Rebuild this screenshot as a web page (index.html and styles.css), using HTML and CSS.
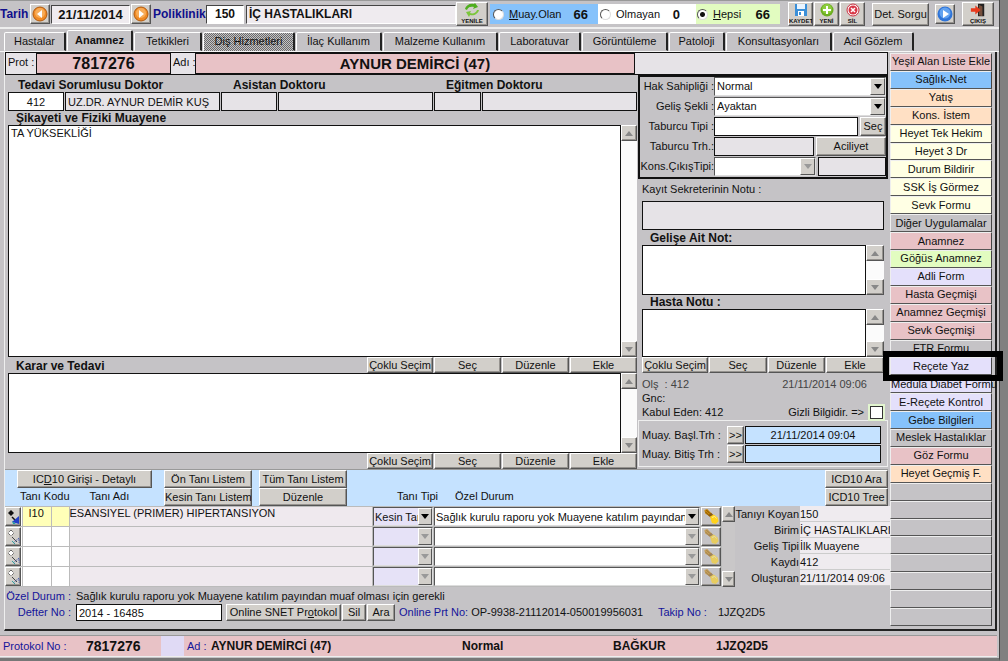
FILE: index.html
```
<!DOCTYPE html>
<html lang="tr">
<head>
<meta charset="utf-8">
<title>Poliklinik - Anamnez</title>
<link rel="stylesheet" href="styles.css">
</head>
<body>
<svg class="defs" aria-hidden="true">
  <symbol id="up" viewBox="0 0 8 5"><path d="M4 0L8 5H0z"/></symbol>
  <symbol id="down" viewBox="0 0 8 5"><path d="M0 0H8L4 5z"/></symbol>
  <symbol id="brush" viewBox="0 0 18 18"><path d="M2 2l3-1 5 5-2 3-5-3z" fill="#c98a10"/><path d="M4 2l4 4M3 4l4 4" stroke="#7a4a00" stroke-width="1"/><path d="M6 8l3-3 3 3-2 3z" fill="#8a5a10"/><path d="M8 9l4-2 4 3 1 4-3 3-4-1-1-3z" fill="#ffd21c"/><path d="M10 10l3-1 2 2" stroke="#fff3a0" fill="none"/></symbol>
  <symbol id="pick" viewBox="0 0 14 16"><path d="M5 1L8 4 5 7 2 4z" fill="#111"/><path d="M6 8l4 4" stroke="#111" stroke-width="1.5"/><path d="M6 13L13 7V15z" fill="#2340c8"/><path d="M6 12l4 3H7z" fill="#20a0a0"/></symbol>
  <symbol id="pick-off" viewBox="0 0 14 16"><path d="M5 1L8 4 5 7 2 4z" fill="#fff" stroke="#333" stroke-dasharray="1 1"/><path d="M6 8l5 5" stroke="#444"/><path d="M7 14l6-5v5" stroke="#4a60b0" fill="none" stroke-dasharray="2 1"/><path d="M6 12l3 3" stroke="#30a0a0"/></symbol>
</svg>
<div class="app">
<div class="window">
  <header class="toolbar">
    <label class="tb-label" for="tarih">Tarih</label>
    <button class="btn nav" aria-label="Önceki gün"><svg viewBox="0 0 16 16"><circle cx="8" cy="8" r="7" fill="#f08a24" stroke="#b05a10"/><circle cx="8" cy="7" r="5" fill="#f8ac58"/><path d="M10 4v8L5 8z" fill="#fff"/></svg></button>
    <input class="tb-input date" id="tarih" value="21/11/2014">
    <button class="btn nav" aria-label="Sonraki gün"><svg viewBox="0 0 16 16"><circle cx="8" cy="8" r="7" fill="#f08a24" stroke="#b05a10"/><circle cx="8" cy="7" r="5" fill="#f8ac58"/><path d="M6 4v8l5-4z" fill="#fff"/></svg></button>
    <label class="tb-label pol" for="pol">Poliklinik</label>
    <input class="tb-input code" id="pol" value="150">
    <input class="tb-input clinic" aria-label="Poliklinik adı" value="İÇ HASTALIKLARI">
    <button class="btn tool wide"><svg viewBox="0 0 16 14"><path d="M1 6C2 2 6 0 10 1l1-1 3 4-5 2 1-2C7 3 4 4 3 7z" fill="#4fae1e"/><path d="M15 7c-1 4-5 6-9 5l-1 2-3-5 5-1-1 2c3 1 6 0 7-3z" fill="#7cc63a"/></svg><span>YENİLE</span></button>
    <div class="filters">
      <label class="f-blue"><input type="radio" name="f"><span><u>M</u>uay.Olan</span><b>66</b></label>
      <label class="f-white"><input type="radio" name="f"><span>Olmayan</span><b>0</b></label>
      <label class="f-green"><input type="radio" name="f" checked><span><u>H</u>epsi</span><b>66</b></label>
    </div>
    <div class="tools">
      <button class="btn tool"><svg viewBox="0 0 14 14"><path d="M1 1h12v12H1z" fill="#3a8fd8"/><path d="M3 1h8v5H3z" fill="#e8f4ff"/><path d="M4 8h6v5H4z" fill="#fff"/><path d="M5 9h2v3H5z" fill="#3a8fd8"/></svg><span>KAYDET</span></button>
      <button class="btn tool"><svg viewBox="0 0 14 14"><circle cx="7" cy="7" r="6.500" fill="#6cae20"/><circle cx="7" cy="6" r="5" fill="#8ccc3c"/><path d="M6 3h2v3h3v2H8v3H6V8H3V6h3z" fill="#fff"/></svg><span>YENİ</span></button>
      <button class="btn tool"><svg viewBox="0 0 14 14"><circle cx="7" cy="7" r="6" fill="#fff" stroke="#c83040"/><circle cx="7" cy="7" r="4.500" fill="#d83848"/><path d="M5 5l4 4M9 5l-4 4" stroke="#fff" stroke-width="1.500"/></svg><span>SİL</span></button>
    </div>
    <button class="btn query">Det. Sorgu</button>
    <button class="btn nav play" aria-label="Çalıştır"><svg viewBox="0 0 16 16"><circle cx="8" cy="8" r="7.500" fill="#2f74d8"/><circle cx="8" cy="7" r="5.500" fill="#62a2f0"/><path d="M6 4v8l6-4z" fill="#fff"/></svg></button>
    <button class="btn tool wide exit"><svg viewBox="0 0 18 14"><path d="M9 0h7v14H9z" fill="#222"/><path d="M10 1l4 2v11l-4-1z" fill="#76503c"/><path d="M1 5h5V2l6 5-6 5V9H1z" fill="#e83a1c"/></svg><span>ÇIKIŞ</span></button>
  </header>

  <nav class="tabs">
    <button class="t1">Hastalar</button><button class="t2 active">Anamnez</button><button class="t3">Tetkikleri</button><button class="t4 dither">Diş Hizmetleri</button><button class="t5">İlaç Kullanım</button><button class="t6">Malzeme Kullanım</button><button class="t7">Laboratuvar</button><button class="t8">Görüntüleme</button><button class="t9">Patoloji</button><button class="t10">Konsultasyonları</button><button class="t11">Acil Gözlem</button>
  </nav>

  <div class="page">
    <main class="main">
      <section class="patient">
        <span class="p-label">Prot :</span><strong class="p-no">7817276</strong>
        <span class="p-label adi">Adı :</span><strong class="p-name">AYNUR DEMİRCİ (47)</strong><span class="p-rest"></span>
      </section>

      <div class="columns">
        <section class="left">
          <div class="doctors">
            <label class="head" for="d1">Tedavi Sorumlusu Doktor</label><label class="head" for="d2">Asistan Doktoru</label><label class="head" for="d3">Eğitmen Doktoru</label>
            <div class="pair p1"><input id="d1" class="field white mid" value="412"><input class="field" aria-label="Doktor adı" value="UZ.DR. AYNUR DEMİR KUŞ"></div>
            <div class="pair"><input id="d2" class="field"><input class="field" aria-label="Asistan adı"></div>
            <div class="pair p3"><input id="d3" class="field"><input class="field" aria-label="Eğitmen adı"></div>
          </div>
          <label class="head line" for="sikayet">Şikayeti ve Fiziki Muayene</label>
          <div class="memo tall"><textarea id="sikayet">TA YÜKSEKLİĞİ</textarea><div class="scroll"><button class="btn" aria-label="Yukarı"><svg><use href="#up"/></svg></button><button class="btn" aria-label="Aşağı"><svg><use href="#down"/></svg></button></div></div>
          <div class="actions"><label class="head" for="karar">Karar ve Tedavi</label><button class="btn">Çoklu Seçim</button><button class="btn">Seç</button><button class="btn">Düzenle</button><button class="btn">Ekle</button></div>
          <div class="memo mid-h"><textarea id="karar"></textarea><div class="scroll"><button class="btn" aria-label="Yukarı"><svg><use href="#up"/></svg></button><button class="btn" aria-label="Aşağı"><svg><use href="#down"/></svg></button></div></div>
          <div class="actions"><span class="head"></span><button class="btn">Çoklu Seçim</button><button class="btn">Seç</button><button class="btn">Düzenle</button><button class="btn">Ekle</button></div>
        </section>

        <section class="right">
          <div class="admit">
            <label for="hak">Hak Sahipliği :</label><div class="combo"><select id="hak"><option>Normal</option></select><span class="arrow"><svg><use href="#down"/></svg></span></div>
            <label for="gelis">Geliş Şekli :</label><div class="combo"><select id="gelis"><option>Ayaktan</option></select><span class="arrow"><svg><use href="#down"/></svg></span></div>
            <label for="tip">Taburcu Tipi :</label><div class="duo"><input id="tip" class="field white"><button class="btn sec">Seç</button></div>
            <label for="trh">Taburcu Trh.:</label><div class="duo"><input id="trh" class="field"><button class="btn acil">Aciliyet</button></div>
            <label for="kons">Kons.ÇıkışTipi:</label><div class="duo"><div class="combo off"><select id="kons" disabled><option></option></select><span class="arrow"><svg><use href="#down"/></svg></span></div><input class="field ext" aria-label="Çıkış açıklaması"></div>
          </div>
          <div class="notes">
            <label class="note-label" for="kayit">Kayıt Sekreterinin Notu :</label>
            <input id="kayit" class="field big">
            <label class="head line" for="gnot">Gelişe Ait Not:</label>
            <div class="memo n1"><textarea id="gnot"></textarea><div class="scroll"><button class="btn" aria-label="Yukarı"><svg><use href="#up"/></svg></button><button class="btn" aria-label="Aşağı"><svg><use href="#down"/></svg></button></div></div>
            <label class="head line" for="hnot">Hasta Notu :</label>
            <div class="memo n2"><textarea id="hnot"></textarea><div class="scroll"><button class="btn" aria-label="Yukarı"><svg><use href="#up"/></svg></button><button class="btn" aria-label="Aşağı"><svg><use href="#down"/></svg></button></div></div>
            <div class="actions small"><button class="btn">Çoklu Seçim</button><button class="btn">Seç</button><button class="btn">Düzenle</button><button class="btn">Ekle</button></div>
            <div class="audit">
              <div><span class="dim">Olş&nbsp; : 412</span><span class="dim stamp">21/11/2014 09:06</span></div>
              <div><span>Gnc:</span></div>
              <div><span>Kabul Eden: 412</span><label class="secret">Gizli Bilgidir. =&gt; <input type="checkbox"></label></div>
            </div>
          </div>
          <div class="times">
            <label for="bas">Muay. Başl.Trh :</label><button class="btn">&gt;&gt;</button><input id="bas" class="field sky" value="21/11/2014 09:04">
            <label for="bit">Muay. Bitiş Trh :</label><button class="btn">&gt;&gt;</button><input id="bit" class="field sky">
          </div>
        </section>
      </div>

      <section class="icd">
        <div class="icd-cell c1"><button class="btn">IC<u>D</u>10 Girişi - Detaylı</button><div class="caps"><span>Tanı Kodu</span><span>Tanı Adı</span></div></div>
        <div class="icd-cell c2"><button class="btn">Ön Tanı Listem</button><button class="btn">Kesin Tanı Listem</button></div>
        <div class="icd-cell c2"><button class="btn">Tüm Tanı Listem</button><button class="btn">Düzenle</button></div>
        <div class="caps types"><span>Tanı Tipi</span><span>Özel Durum</span></div>
        <div class="icd-cell c3"><button class="btn">ICD10 Ara</button><button class="btn">ICD10 Tree</button></div>
      </section>

      <section class="diag">
        <table>
          <colgroup><col class="k1"><col class="k2"><col class="k3"><col><col class="k5"><col class="k6"><col class="k7"></colgroup>
          <tbody>
          <tr class="on"><td><button class="btn pick" aria-label="Tanı seç"><svg><use href="#pick"/></svg></button></td><td class="code">I10</td><td></td><td class="name">ESANSIYEL (PRIMER) HIPERTANSIYON</td><td><div class="combo lav"><select aria-label="Tanı tipi"><option>Kesin Tanı</option></select><span class="arrow"><svg><use href="#down"/></svg></span></div></td><td><div class="combo"><select aria-label="Özel durum"><option>Sağlık kurulu raporu yok Muayene katılım payından</option></select><span class="arrow"><svg><use href="#down"/></svg></span></div></td><td><button class="btn brush" aria-label="Temizle"><svg><use href="#brush"/></svg></button></td></tr>
          <tr><td><button class="btn pick" aria-label="Tanı seç"><svg><use href="#pick-off"/></svg></button></td><td></td><td></td><td class="name"></td><td><div class="combo lav off"><select disabled aria-label="Tanı tipi"><option></option></select><span class="arrow"><svg><use href="#down"/></svg></span></div></td><td><div class="combo off"><select disabled aria-label="Özel durum"><option></option></select><span class="arrow"><svg><use href="#down"/></svg></span></div></td><td><button class="btn brush" aria-label="Temizle"><svg><use href="#brush"/></svg></button></td></tr>
          <tr><td><button class="btn pick" aria-label="Tanı seç"><svg><use href="#pick-off"/></svg></button></td><td></td><td></td><td class="name"></td><td><div class="combo lav off"><select disabled aria-label="Tanı tipi"><option></option></select><span class="arrow"><svg><use href="#down"/></svg></span></div></td><td><div class="combo off"><select disabled aria-label="Özel durum"><option></option></select><span class="arrow"><svg><use href="#down"/></svg></span></div></td><td><button class="btn brush" aria-label="Temizle"><svg><use href="#brush"/></svg></button></td></tr>
          <tr><td><button class="btn pick" aria-label="Tanı seç"><svg><use href="#pick-off"/></svg></button></td><td></td><td></td><td class="name"></td><td><div class="combo lav off"><select disabled aria-label="Tanı tipi"><option></option></select><span class="arrow"><svg><use href="#down"/></svg></span></div></td><td><div class="combo off"><select disabled aria-label="Özel durum"><option></option></select><span class="arrow"><svg><use href="#down"/></svg></span></div></td><td><button class="btn brush" aria-label="Temizle"><svg><use href="#brush"/></svg></button></td></tr>
          </tbody>
        </table>
        <div class="scroll thin"><button class="btn" aria-label="Yukarı"><svg><use href="#up"/></svg></button><button class="btn" aria-label="Aşağı"><svg><use href="#down"/></svg></button></div>
        <dl class="info">
          <dt>Tanıyı Koyan</dt><dd>150</dd>
          <dt>Birim</dt><dd>İÇ HASTALIKLARI</dd>
          <dt>Geliş Tipi</dt><dd>İlk Muayene</dd>
          <dt>Kaydı</dt><dd>412</dd>
          <dt>Oluşturan</dt><dd>21/11/2014 09:06</dd>
        </dl>
      </section>

      <section class="foot">
        <div class="foot-row"><span class="navy cap">Özel Durum :</span><span>Sağlık kurulu raporu yok Muayene katılım payından muaf olması için gerekli</span></div>
        <div class="foot-row"><label class="navy cap" for="defter">Defter No :</label><input id="defter" class="field white defter" value="2014 - 16485"><button class="btn snet">Online SNET Pr<u>o</u>tokol</button><button class="btn mini">Sil</button><button class="btn mini">Ara</button><span class="prt"><span class="navy">Online Prt No:</span> OP-9938-21112014-050019956031</span><span class="navy takip">Takip No :</span><span>1JZQ2D5</span></div>
      </section>
    </main>

    <aside class="side">
      <button class="rose">Yeşil Alan Liste Ekle</button>
      <button class="blue">Sağlık-Net</button>
      <button class="peach">Yatış</button>
      <button class="peach">Kons. İstem</button>
      <button class="cream">Heyet Tek Hekim</button>
      <button class="cream">Heyet 3 Dr</button>
      <button class="cream">Durum Bildirir</button>
      <button class="cream">SSK İş Görmez</button>
      <button class="cream">Sevk Formu</button>
      <button>Diğer Uygulamalar</button>
      <button class="rose">Anamnez</button>
      <button class="green">Göğüs Anamnez</button>
      <button class="lilac">Adli Form</button>
      <button class="rose">Hasta Geçmişi</button>
      <button class="rose">Anamnez Geçmişi</button>
      <button class="rose">Sevk Geçmişi</button>
      <button>FTR Formu</button>
      <button class="lilac marked">Reçete Yaz</button>
      <button class="lilac">Medula Diabet Formu</button>
      <button class="lilac">E-Reçete Kontrol</button>
      <button class="blue">Gebe Bilgileri</button>
      <button>Meslek Hastalıklar</button>
      <button class="rose">Göz Formu</button>
      <button class="peach">Heyet Geçmiş F.</button>
      <button aria-label="Boş 1"></button><button aria-label="Boş 2"></button><button aria-label="Boş 3"></button><button aria-label="Boş 4"></button><button aria-label="Boş 5"></button><button aria-label="Boş 6"></button><button aria-label="Boş 7"></button><button aria-label="Boş 8"></button>
    </aside>
  </div>

  <footer class="status">
    <span class="navy">Protokol No :</span><b class="num">7817276</b><i></i><span class="navy ad">Ad :</span><b>AYNUR DEMİRCİ (47)</b><b>Normal</b><b>BAĞKUR</b><b>1JZQ2D5</b>
  </footer>
</div>
</div>
</body>
</html>
```
FILE: styles.css
```
* { box-sizing: border-box; }
body { margin: 0; background: #fff; font: 11px/13px "Liberation Sans", Arial, sans-serif; color: #111; }
button, input, select, textarea { font: inherit; color: inherit; margin: 0; padding: 0; border-radius: 0; min-width: 0; }
button { white-space: nowrap; overflow: hidden; }
svg { display: block; }
.defs { position: absolute; width: 0; height: 0; }
.navy { color: #14149a; }

.app { background: #808080; padding-right: 8px; }
.window { background: #c5c3c6; border-right: 1px solid #444; border-bottom: 3px solid #777; }

.btn { background: #d2cfca; border: 1px solid; border-color: #fff #555 #555 #fff; box-shadow: inset -1px -1px #96938f; display: block; text-align: center; line-height: 13px; }
.field { background: #e6e3e7; border: 1px solid #111; height: 19px; padding: 0 2px; width: 100%; }
.field.white { background: #fff; }
.field.sky { background: #c5e2ff; text-align: center; }
.field.mid { text-align: center; }
.head { font-weight: bold; font-size: 12px; line-height: 14px; }
.line { display: block; padding-left: 8px; }

/* toolbar */
.toolbar { display: flex; align-items: center; height: 29px; border-top: 1px solid #999; border-bottom: 2px solid #eee; padding-right: 5px; }
.tb-label { color: #10108c; font-weight: bold; font-size: 12px; width: 30px; }
.tb-label.pol { width: 55px; padding-left: 2px; }
.tb-input { border: 1px solid; border-color: #444 #fff #fff #444; background: #efebef; height: 19px; font-weight: bold; font-size: 12px; text-align: center; }
.date { width: 79px; margin: 0 1px; font-size: 13px; }
.code { width: 38px; background: #fff; }
.clinic { flex: 1; text-align: left; padding-left: 2px; margin-left: 2px; }
.nav { width: 20px; height: 20px; padding: 1px; flex: none; }
.nav svg { width: 16px; height: 16px; }
.tool { width: 25px; height: 24px; flex: none; }
.tool svg { width: 16px; height: 14px; margin: 0 auto; }
.tool span { display: block; font-size: 6px; line-height: 8px; font-weight: bold; }
.wide { width: 32px; }
.filters { display: flex; align-items: center; margin-left: 2px; }
.filters label { display: flex; align-items: center; height: 20px; gap: 5px; }
.filters b { font-size: 13px; margin-left: auto; }
.filters input { appearance: none; width: 11px; height: 11px; border-radius: 50%; border: 1px solid; border-color: #555 #ddd #ddd #555; background: #fff; flex: none; }
.filters input:checked { background: radial-gradient(circle, #111 0 2px, #fff 3px); }
.f-blue { background: #86c2fb; width: 108px; padding: 0 10px 0 3px; }
.f-white { background: #fff; width: 98px; padding: 0 16px 0 2px; }
.f-green { background: #e2fcc0; width: 84px; padding: 0 10px 0 1px; }
.tools { display: flex; margin: 0 7px 0 8px; gap: 1px; }
.query { width: 57px; height: 23px; margin-right: 6px; }
.exit { margin-left: 7px; }

/* tabs */
.tabs { display: flex; align-items: flex-end; height: 23px; padding-left: 4px; gap: 1px; border-bottom: 1px solid #f6f6f6; }
.tabs button { background: #c5c3c6; border: 1px solid; border-color: #fff #222 transparent #fff; border-right-width: 2px; height: 19px; border-radius: 2px 2px 0 0; }
.tabs .active { font-weight: bold; height: 21px; }
.tabs .dither { background: repeating-conic-gradient(#6a6a6a 0 25%, #c5c3c6 0 50%) 0 0 / 2px 2px; color: #111; }
.t1 { width: 62px; } .t2 { width: 66px; } .t3 { width: 68px; } .t4 { width: 92px; } .t5 { width: 86px; } .t6 { width: 115px; }
.t7 { width: 82px; } .t8 { width: 86px; } .t9 { width: 56px; } .t10 { width: 106px; } .t11 { width: 81px; }

/* page */
.page { display: flex; margin: 0 2px 0 4px; border-right: 2px solid #222; border-bottom: 2px solid #222; border-left: 1px solid #eee; }
.main { flex: 1; min-width: 0; }
.patient { display: flex; height: 23px; border: 1px solid #111; background: #e6e3e7; line-height: 19px; }
.p-label { width: 30px; padding-left: 2px; white-space: nowrap; }
.p-label.adi { width: 24px; }
.patient strong { border: 1px solid #111; background: #e8c2c6; text-align: center; font-size: 16px; }
.p-no { width: 135px; }
.patient .p-name { flex: 1; font-size: 15px; }
.p-rest { width: 252px; }
.columns { display: flex; }
.left { flex: 1; min-width: 0; padding: 3px 1px 0 3px; }
.doctors { display: grid; grid-template-columns: 212px 213px 1fr; }
.doctors .head { padding-left: 10px; white-space: nowrap; }
.doctors .head + .head { padding-left: 13px; }
.pair { display: grid; grid-template-columns: 56px 1fr; gap: 1px; }
.pair + .pair { padding-left: 1px; }
.pair + .p3 { grid-template-columns: 47px 1fr; }
.memo { display: flex; }
.memo textarea { flex: 1; border: 1px solid #111; background: #fff; resize: none; padding: 1px 2px; overflow: hidden; display: block; }
.scroll { width: 16px; display: flex; flex-direction: column; justify-content: space-between; background: #fbfbfb; flex: none; }
.scroll .btn { height: 16px; }
.scroll svg { width: 8px; height: 5px; margin: 0 auto; fill: #888; }
.tall { height: 232px; }
.mid-h { height: 80px; }
.actions { display: grid; grid-template-columns: 1fr 66px 67px 67px 67px; gap: 1px; height: 16px; }
.actions .head { padding: 2px 0 0 8px; }

.right { width: 250px; }
.admit { border: 2px solid #111; display: grid; grid-template-columns: 74px 1fr; row-gap: 1px; align-items: center; padding-bottom: 1px; }
.admit label { text-align: right; white-space: nowrap; justify-self: end; }
.duo { display: flex; gap: 2px; }
.combo { display: flex; height: 19px; flex: 1; background: #fff; border: 1px solid; border-color: #555 #ddd #ddd #555; min-width: 0; }
.combo select { appearance: none; border: 0; background: none; flex: 1; padding-left: 2px; overflow: hidden; opacity: 1; }
.arrow { width: 15px; background: #d2cfca; border: 1px solid; border-color: #fff #555 #555 #fff; display: flex; align-items: center; justify-content: center; flex: none; }
.arrow svg { width: 8px; height: 5px; }
.off .arrow svg { fill: #999; }
.lav { background: #e6e2f7; }
.sec { width: 26px; flex: none; }
.acil { width: 70px; flex: none; }
.ext { width: 68px; flex: none; }
.notes { padding: 4px 4px 0; }
.note-label { display: block; padding-bottom: 5px; }
.big { height: 29px; display: block; margin-bottom: 1px; }
.n1 { height: 50px; }
.n2 { height: 48px; }
.notes .scroll { width: 18px; }
.notes .actions { grid-template-columns: 66px 58px 57px 1fr; }
.audit { padding: 5px 1px 0 0; }
.audit div { display: flex; height: 14px; justify-content: space-between; }
.dim { color: #444; }
.stamp { padding-right: 16px; }
.secret { display: flex; gap: 6px; white-space: nowrap; }
.secret input { appearance: none; width: 13px; height: 13px; background: #fff; border: 1px solid #333; outline: 2px solid #e2f5cf; }
.times { display: grid; grid-template-columns: 84px 17px 1fr; gap: 1px; padding: 5px 6px 3px 3px; border: 1px solid #eee; align-items: center; }
.times .field { height: 18px; }
.times .btn { height: 18px; }

/* diagnoses */
.icd { display: flex; background: #c5e2ff; border-top: 1px solid #999; padding-left: 12px; height: 37px; }
.icd-cell { display: grid; grid-template-rows: 18px 18px; }
.c1 { width: 135px; margin-right: 12px; }
.c2 { width: 88px; margin-right: 7px; }
.c3 { width: 63px; }
.caps { display: flex; gap: 20px; padding: 2px 0 0 3px; }
.types { flex: 1; padding: 20px 0 0 43px; gap: 17px; }
.diag { display: flex; }
.diag table { border-collapse: collapse; table-layout: fixed; flex: 1; width: 0; }
.diag td { padding: 0; height: 20px; background: #fff; border: 1px solid #bbb; border-left: 0; line-height: 12px; vertical-align: top; }
.diag tr.on td:nth-child(2), .diag tr.on td:nth-child(3) { background: #ffffb8; }
.diag td.code { padding-left: 6px; }
.diag td.name { background: #efe9ee; }
.diag .combo select { padding-left: 1px; }
.diag .arrow { width: 14px; }
.k1 { width: 17px; } .k2 { width: 29px; } .k3 { width: 18px; } .k5 { width: 61px; } .k6 { width: 267px; } .k7 { width: 21px; }
.pick { width: 16px; height: 19px; }
.pick svg { width: 14px; height: 16px; }
.brush { width: 20px; height: 19px; background: #c5c3c6; }
.brush svg { width: 18px; height: 17px; }
.diag tr:not(.on) .brush svg { opacity: .6; }
.thin { width: 13px; background: #c9c7c8; }
.info { display: grid; grid-template-columns: 64px 1fr; width: 153px; margin: 0; grid-auto-rows: 16px; column-gap: 1px; }
.info dt { text-align: right; white-space: nowrap; line-height: 16px; }
.info dd { margin: 0; background: #efebef; border-bottom: 1px solid #ccc; white-space: nowrap; line-height: 16px; }
.foot { padding: 1px 0 8px; }
.foot-row { display: flex; align-items: center; min-height: 16px; white-space: nowrap; }
.cap { width: 71px; text-align: right; padding-right: 5px; }
.foot-row .defter { width: 146px; height: 17px; margin-right: 4px; }
.snet { width: 115px; }
.mini { width: 24px; margin-left: 1px; }
.mini + .mini { width: 28px; }
.foot-row .btn { height: 17px; }
.prt { padding-left: 4px; flex: 1; }
.takip { width: 60px; }
.takip + span { width: 170px; }

/* side menu */
.side { width: 107px; display: flex; flex-direction: column; padding: 1px 3px 3px 2px; }
.side button { flex: 1; min-height: 17px; background: #c5c3c6; border: 1px solid; border-color: #eee #444 #555 #eee; line-height: 13px; overflow: visible; }
.side .rose { background: #e8c2c6; }
.side .blue { background: #86c2fb; }
.side .peach { background: #ffe0c4; }
.side .cream { background: #ffffe4; }
.side .green { background: #e2fcc0; }
.side .lilac { background: #e4e0fb; }
.side .marked { position: relative; }
.marked::after { content: ""; position: absolute; inset: -7px -12px -7px -8px; border: 6px solid #000; z-index: 1; }

.status { display: grid; grid-template-columns: 83px 75px 23px 27px 251px 151px 103px 1fr; align-items: center; height: 22px; margin: 4px 2px 1px 0; padding-left: 3px; background: #e8c2c6; border-top: 1px solid #999; border-bottom: 1px solid #eee; white-space: nowrap; }
.status b { font-size: 12px; }
.status .num { font-size: 14px; }
.status i { background: #e0daf5; align-self: stretch; }
.status .ad { padding-left: 3px; }
```
